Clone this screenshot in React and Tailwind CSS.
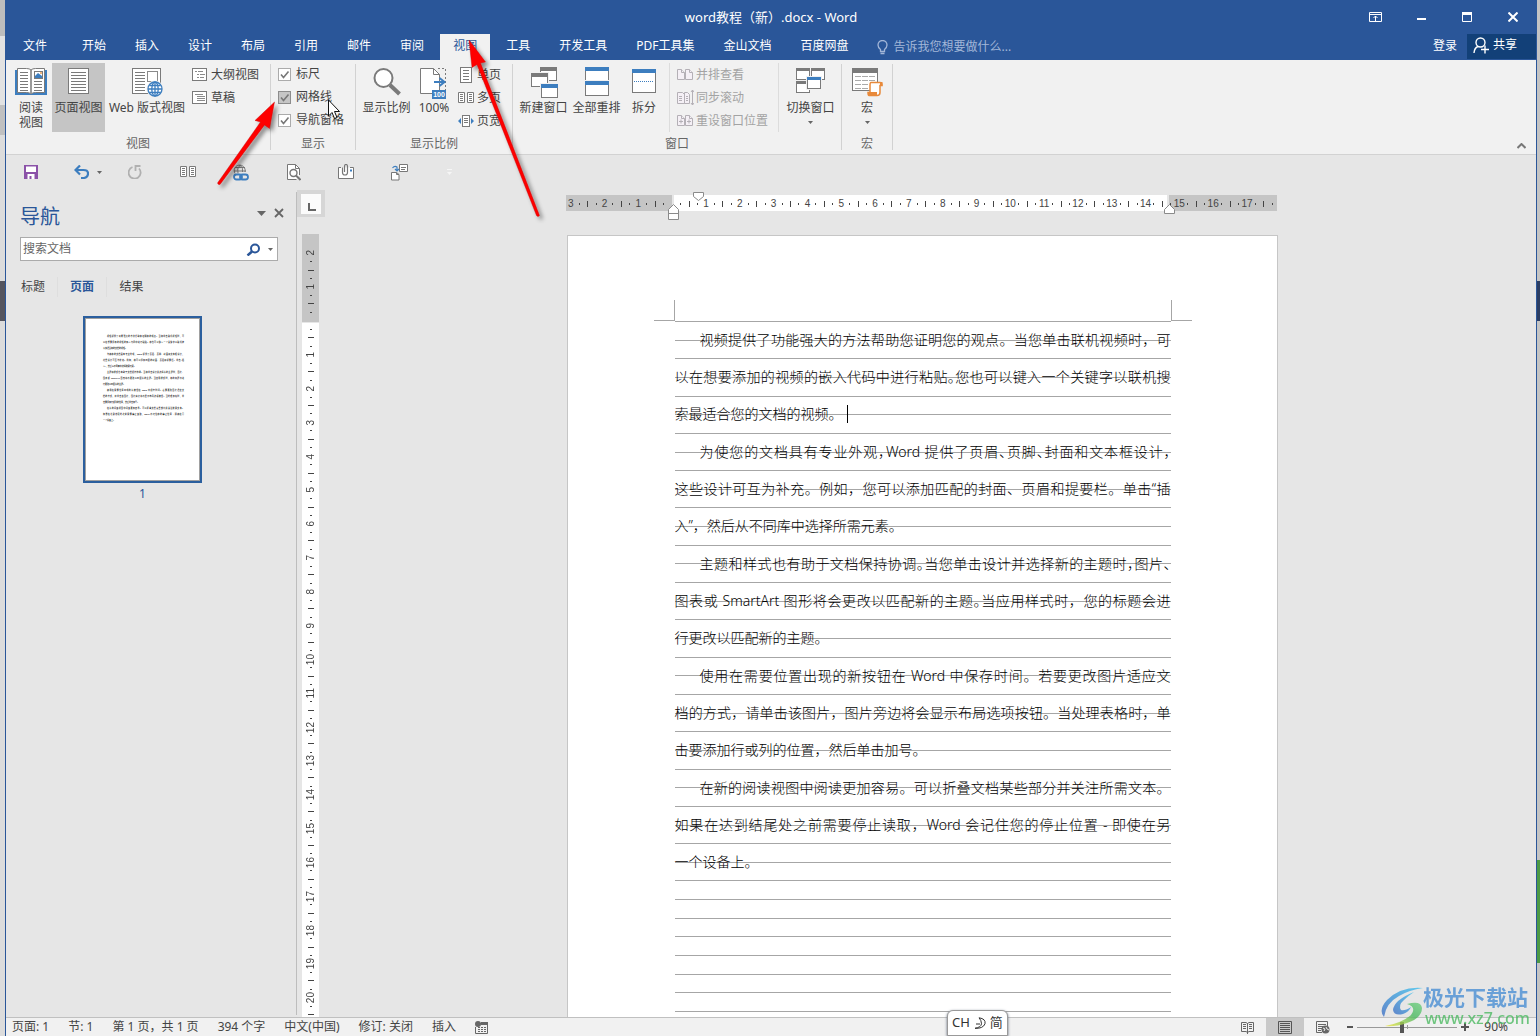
import { useState } from "react";
import clsx from "clsx";

const tabs = ["文件", "开始", "插入", "设计", "布局", "引用", "邮件", "审阅", "视图", "工具", "开发工具", "PDF工具集", "金山文档", "百度网盘"];

// tight: the punctuation marks that take half a character in this line
const lines = [
  { text: "视频提供了功能强大的方法帮助您证明您的观点。当您单击联机视频时，可", indent: true, full: true },
  { text: "以在想要添加的视频的嵌入代码中进行粘贴。您也可以键入一个关键字以联机搜", full: true, tight: "。" },
  { text: "索最适合您的文档的视频。", caret: true },
  { text: "为使您的文档具有专业外观，Word 提供了页眉、页脚、封面和文本框设计，", indent: true, full: true, tight: "，、" },
  { text: "这些设计可互为补充。例如，您可以添加匹配的封面、页眉和提要栏。单击“插", full: true },
  { text: "入”，然后从不同库中选择所需元素。" },
  { text: "主题和样式也有助于文档保持协调。当您单击设计并选择新的主题时，图片、", indent: true, full: true, tight: "。，、" },
  { text: "图表或 SmartArt 图形将会更改以匹配新的主题。当应用样式时，您的标题会进", full: true, tight: "。" },
  { text: "行更改以匹配新的主题。" },
  { text: "使用在需要位置出现的新按钮在 Word 中保存时间。若要更改图片适应文", indent: true, full: true },
  { text: "档的方式，请单击该图片，图片旁边将会显示布局选项按钮。当处理表格时，单", full: true },
  { text: "击要添加行或列的位置，然后单击加号。" },
  { text: "在新的阅读视图中阅读更加容易。可以折叠文档某些部分并关注所需文本。", indent: true, full: true },
  { text: "如果在达到结尾处之前需要停止读取，Word 会记住您的停止位置 - 即使在另", full: true },
  { text: "一个设备上。" },
];

/* SMALL SHAPES */
const Svg = ({ w, h, children, className }) => (
  <svg width={w} height={h} viewBox={`0 0 ${w} ${h}`} fill="none" className={clsx("shrink-0", className)} aria-hidden="true">
    {children}
  </svg>
);

const Caret = ({ className }) => (
  <Svg w={5} h={3} className={className}><path d="M0 0h5L2.500 3z" fill="#666" /></Svg>
);

const Rows = ({ x, y, w, n, gap = 3, color = "#7a7a7a" }) => (
  <path d={Array.from({ length: n }, (_, i) => `M${x} ${y + i * gap + 0.5}h${w}`).join("")} stroke={color} />
);

/* RIBBON ICONS */
const ReadIcon = () => (
  <Svg w={32} h={28}>
    <path d="M0 3h3v22h26V3h3v25H0z" fill="#3d7ebf" />
    <path d="M2.500 1.500h9q3 0 4.500 1.500 1.500-1.500 4.500-1.500h9v24h-9q-3 0-4.500 1.500-1.500-1.500-4.500-1.500h-9z" fill="#fff" stroke="#7a7a7a" />
    <path d="M16 3v23" stroke="#7a7a7a" strokeWidth="1.500" />
    <Rows x={5} y={5} w={8} n={7} />
    <Rows x={19} y={14} w={8} n={4} />
    <rect x="19.500" y="4.500" width="8" height="7" fill="#fff" stroke="#7a7a7a" />
    <path d="M20 11V9l3-3 4 3v2z" fill="#3d7ebf" />
    <circle cx="26" cy="6" r="1" fill="#eda15c" />
  </Svg>
);
const PageIcon = () => (
  <Svg w={22} h={28}>
    <rect x="0.500" y="1.500" width="20" height="25" fill="#fff" stroke="#7a7a7a" />
    <Rows x={3} y={5} w={15} n={7} />
  </Svg>
);
const WebIcon = () => (
  <Svg w={32} h={30}>
    <rect x="1.500" y="1.500" width="28" height="25" fill="#fff" stroke="#7a7a7a" />
    <Rows x={4} y={5} w={10} n={7} />
    <rect x="16.500" y="4.500" width="10" height="10" fill="#fff" stroke="#8a8a8a" />
    <circle cx="24" cy="22" r="8.500" fill="#f1f1f1" />
    <g stroke="#3d7ebf" strokeWidth="1.300">
      <circle cx="24" cy="22" r="7" fill="#fff" />
      <ellipse cx="24" cy="22" rx="3.200" ry="7" />
      <path d="M24 15v14M17 22h14M18.500 18.500h11M18.500 25.500h11" />
    </g>
  </Svg>
);
const OutlineIcon = () => (
  <Svg w={16} h={14}>
    <rect x="0.500" y="0.500" width="14" height="12" fill="#fff" stroke="#7a7a7a" />
    <path d="M3 3.500h2M6 3.500h5M5 6.500h2M8 6.500h5M5 9.500h2M8 9.500h4" stroke="#8a8a8a" />
  </Svg>
);
const DraftIcon = () => (
  <Svg w={16} h={14}>
    <rect x="0.500" y="0.500" width="14" height="12" fill="#fff" stroke="#7a7a7a" />
    <path d="M3 3.500h8M5 5.500h8M5 7.500h8M5 9.500h8" stroke="#8a8a8a" />
  </Svg>
);
const ZoomIcon = () => (
  <Svg w={28} h={30}>
    <path d="M17 18l9.500 9" stroke="#7a7a7a" strokeWidth="4" />
    <circle cx="10.500" cy="11" r="9" fill="#fff" stroke="#7a7a7a" strokeWidth="2" />
  </Svg>
);
const HundredIcon = () => (
  <Svg w={28} h={32}>
    <path d="M18 1.500h7.500V24" stroke="#7a7a7a" strokeDasharray="2 2" />
    <path d="M.5 1.500h13l6 6v19H.5z" fill="#fff" stroke="#7a7a7a" />
    <path d="M13.500 1.500v6h6" stroke="#7a7a7a" />
    <path d="M14 15h10M19.500 11l5 4-5 4" stroke="#3d7ebf" strokeWidth="2" />
    <rect x="12" y="23" width="14" height="9" fill="#3d7ebf" />
    <text x="19" y="30" fontSize="7" fontWeight="700" textAnchor="middle" fill="#fff" fontFamily="Liberation Sans, sans-serif">100</text>
  </Svg>
);
const OnePageIcon = () => (
  <Svg w={16} h={16}>
    <rect x="2.500" y="0.500" width="11" height="15" fill="#fff" stroke="#7a7a7a" />
    <Rows x={5} y={3} w={6} n={4} />
  </Svg>
);
const TwoPageIcon = () => (
  <Svg w={16} h={12}>
    <path d="M.5.5h6v10h-6zM9.500.5h6v10h-6z" fill="#fff" stroke="#7a7a7a" />
    <Rows x={2} y={2} w={3} n={4} gap={2} />
    <Rows x={11} y={2} w={3} n={4} gap={2} />
  </Svg>
);
const PageWidthIcon = () => (
  <Svg w={16} h={12}>
    <rect x="4.500" y="0.500" width="7" height="11" fill="#fff" stroke="#7a7a7a" />
    <Rows x={6} y={3} w={4} n={3} gap={2} />
    <path d="M3 3v6L0 6zM13 3v6l3-3z" fill="#3d7ebf" />
  </Svg>
);
const WindowShape = ({ x, y, w, h, bar = 4, color = "#7a7a7a" }) => (
  <g>
    <rect x={x - 1} y={y - 1} width={w + 2} height={h + 2} fill="#f1f1f1" />
    <rect x={x + 0.5} y={y + 0.5} width={w - 1} height={h - 1} fill="#fff" stroke="#7a7a7a" />
    <rect x={x} y={y} width={w} height={bar} fill={color} />
  </g>
);
const NewWindowIcon = () => (
  <Svg w={28} h={32}>
    <WindowShape x={10} y={0} w={17} h={14} />
    <WindowShape x={1} y={6} w={17} h={14} />
    <WindowShape x={11} y={17} w={17} h={14} color="#3d7ebf" />
  </Svg>
);
const ArrangeIcon = () => (
  <Svg w={26} h={30}>
    <WindowShape x={1} y={0} w={24} h={14} color="#3d7ebf" />
    <WindowShape x={1} y={14} w={24} h={15} color="#3d7ebf" />
  </Svg>
);
const SplitIcon = () => (
  <Svg w={24} h={28}>
    <WindowShape x={0} y={2} w={24} h={24} color="#3d7ebf" />
    <path d="M2 14.500h20" stroke="#3d7ebf" strokeDasharray="1 1" />
  </Svg>
);
const SideIcon = ({ kind }) => (
  <Svg w={17} h={16}>
    <g stroke="#b4b0b6" fill="#f5f0f6">
      {kind === "sync" ? (
        <>
          <path d="M.5 2.500h5l2 2v9h-7zM7.500 2.500h3l2 2v9h-5z" />
          <path d="M2 6.500h3M2 8.500h3M2 10.500h3M9 6.500h2M9 8.500h2M9 10.500h2M15.500 0v15M14 2l1.500-2L17 2M14 13l1.500 2 1.500-2" />
        </>
      ) : (
        <>
          <path d="M.5 2.500h4l3 3v7h-7zM8.500 2.500h4l3 3v7h-7z" />
          <path d="M4.500 2.500v3h3M12.500 2.500v3h3" />
          {kind === "reset" && <path d="M2 8.500h4M4 6.500v4M10 8.500h4M12 6.500v4" />}
        </>
      )}
    </g>
  </Svg>
);
const SwitchIcon = () => (
  <Svg w={30} h={26}>
    <WindowShape x={0} y={1} w={14} h={12} bar={3} />
    <WindowShape x={15} y={1} w={14} h={12} bar={3} />
    <WindowShape x={0} y={14} w={14} h={12} bar={3} />
    <WindowShape x={11} y={10} w={14} h={12} bar={3} color="#3d7ebf" />
  </Svg>
);
const MacroIcon = () => (
  <Svg w={32} h={30}>
    <WindowShape x={1} y={1} w={26} h={23} bar={5} />
    <path d="M4 9.500h6M11 9.500h6M18 9.500h6M4 13.500h6M11 13.500h6M18 13.500h6M4 17.500h6M11 17.500h6M4 21.500h6M11 21.500h6" stroke="#aaa" />
    <path d="M20 15.500h9q2 0 2 3h-2v7q0 3-3 3h-8q-1 0-1-3h2v-7q0-3 1-3z" fill="#fff" stroke="#e8893a" strokeWidth="1.500" />
    <path d="M17 25h9v3.500h-9zM29 15h2.500v3.500H29z" fill="#e8893a" />
  </Svg>
);

/* RIBBON PARTS */
const Group = ({ label, className, children }) => (
  <section aria-label={label} className="flex items-start">
    <div className="flex flex-col">
      <div className={clsx("flex h-[72px] items-start pt-[3px]", className)}>{children}</div>
      <p className="h-[22px] text-center text-xs leading-[24px] text-[#666]">{label}</p>
    </div>
    <div className="mt-1 h-[86px] w-px bg-[#d2d2d2]" />
  </section>
);

const BigButton = ({ icon, label, className, active, drop }) => (
  <button type="button" className={clsx("flex h-[69px] shrink-0 flex-col items-center text-xs leading-[15px] text-[#444]", active && "bg-[#c5c5c5]", className)}>
    <span className="flex h-[37px] w-full items-start justify-center pt-[4px]">{icon}</span>
    <span className="whitespace-pre-line">{label}</span>
    {drop && <Caret className="mt-[6px]" />}
  </button>
);

const SmallButton = ({ icon, label, disabled }) => (
  <button type="button" disabled={disabled} className={clsx("flex h-[23px] items-center gap-[3px] text-xs whitespace-nowrap", disabled ? "text-[#a3a3a3]" : "text-[#444]")}>
    <span className="flex w-4 items-center justify-center">{icon}</span>
    {label}
  </button>
);

const CheckRow = ({ label, hot }) => {
  const [on, setOn] = useState(true);
  return (
    <label className="flex h-[23px] items-center gap-[5px] pb-px text-xs text-[#444]">
      <span className="grid">
        <input type="checkbox" checked={on} onChange={() => setOn(!on)}
          className={clsx("size-[13px] appearance-none border [grid-area:1/1]", hot ? "border-[#8c8c8c] bg-[#c5c5c5]" : "border-[#ababab] bg-white")} />
        {on && (
          <Svg w={13} h={13} className="pointer-events-none [grid-area:1/1]">
            <path d="M3 6.500l2.500 3 5-6" stroke="#777" strokeWidth="1.600" />
          </Svg>
        )}
      </span>
      {label}
    </label>
  );
};

function TitleBar() {
  const [active, setActive] = useState("视图");
  return (
    <header className="bg-[#2a5699] text-white">
      <div className="grid h-[34px] grid-cols-[1fr_auto_1fr] items-center">
        <span />
        <h1 className="text-[13px] leading-4">word教程（新）.docx - Word</h1>
        <div className="flex h-8 justify-end">
          <button type="button" aria-label="功能区显示选项" className="flex w-[46px] items-center justify-center">
            <Svg w={13} h={10}><path d="M.5.5h12v9H.5zM.5 2.500h12M6.500 9V4M4.500 6l2-2 2 2" stroke="#fff" /></Svg>
          </button>
          <button type="button" aria-label="最小化" className="flex w-[46px] items-center justify-center pt-1">
            <Svg w={9} h={2}><path d="M0 0h9v2H0z" fill="#fff" /></Svg>
          </button>
          <button type="button" aria-label="最大化" className="flex w-[46px] items-center justify-center">
            <Svg w={10} h={10}><path d="M.5.5h9v9h-9z" stroke="#fff" /><path d="M0 0h10v3H0z" fill="#fff" /></Svg>
          </button>
          <button type="button" aria-label="关闭" className="flex w-[46px] items-center justify-center">
            <Svg w={10} h={10}><path d="M.5.5l9 9M9.500.5l-9 9" stroke="#fff" strokeWidth="2" /></Svg>
          </button>
        </div>
      </div>
      <div className="flex h-[26px] items-stretch text-xs">
        <nav className="flex gap-[3px] pl-1">
          {tabs.map((tab) => (
            <button key={tab} type="button" onClick={() => setActive(tab)}
              className={clsx("px-[13px] pb-[2px] whitespace-nowrap", active === tab && "bg-[#f1f1f1] text-[#2a5699]", tab === "文件" && "mr-[6px]")}>
              {tab}
            </button>
          ))}
        </nav>
        <button type="button" className="ml-4 flex items-center gap-[5px] text-[#a2b6d8]">
          <Svg w={11} h={15}>
            <path d="M3.500 9.500Q1 7.500 1 5a4.300 4.300 0 0 1 9 0q0 2.500-2.500 4.500v2h-4zM3.500 13.500h4" stroke="#a2b6d8" strokeWidth="1.300" />
          </Svg>
          <span>告诉我您想要做什么...</span>
        </button>
        <button type="button" className="ml-auto px-[10px] pb-[2px]">登录</button>
        <button type="button" className="mb-px flex w-[69px] items-center gap-1 bg-[#124078] pb-[3px] pl-[6px]">
          <Svg w={16} h={17}>
            <circle cx="7.500" cy="5.500" r="4.500" stroke="#fff" strokeWidth="1.400" />
            <path d="M1 16q.3-5 4-6.500M8 12.500h8M12 8.500v8" stroke="#fff" strokeWidth="1.400" />
          </Svg>
          共享
        </button>
      </div>
    </header>
  );
}

function Ribbon() {
  return (
    <div className="flex h-[95px] border-b border-[#d2d2d2] bg-[#f1f1f1]">
      <Group label="视图" className="gap-px pr-[11px] pl-[5px]">
        <BigButton icon={<ReadIcon />} label={"阅读\n视图"} className="w-[40px]" />
        <BigButton icon={<PageIcon />} label="页面视图" active className="w-[53px]" />
        <BigButton icon={<WebIcon />} label="Web 版式视图" className="w-[82px] whitespace-nowrap" />
        <div className="ml-[3px]">
          <SmallButton icon={<OutlineIcon />} label="大纲视图" />
          <SmallButton icon={<DraftIcon />} label="草稿" />
        </div>
      </Group>
      <Group label="显示" className="flex-col pr-[11px] pl-[7px]">
        <CheckRow label="标尺" />
        <CheckRow label="网格线" hot />
        <CheckRow label="导航窗格" />
      </Group>
      <Group label="显示比例" className="pr-[11px] pl-1">
        <BigButton icon={<ZoomIcon />} label="显示比例" className="w-[53px]" />
        <BigButton icon={<HundredIcon />} label="100%" className="w-[42px]" />
        <div className="ml-[3px]">
          <SmallButton icon={<OnePageIcon />} label="单页" />
          <SmallButton icon={<TwoPageIcon />} label="多页" />
          <SmallButton icon={<PageWidthIcon />} label="页宽" />
        </div>
      </Group>
      <Group label="窗口" className="px-1">
        <BigButton icon={<NewWindowIcon />} label="新建窗口" className="w-[53px]" />
        <BigButton icon={<ArrangeIcon />} label="全部重排" className="w-[53px]" />
        <BigButton icon={<SplitIcon />} label="拆分" className="w-[42px]" />
        <div className="ml-1 border-x border-[#dcdcdc] pr-[10px] pl-[7px]">
          <SmallButton icon={<SideIcon />} label="并排查看" disabled />
          <SmallButton icon={<SideIcon kind="sync" />} label="同步滚动" disabled />
          <SmallButton icon={<SideIcon kind="reset" />} label="重设窗口位置" disabled />
        </div>
        <BigButton icon={<SwitchIcon />} label="切换窗口" drop className="ml-[5px] w-[53px]" />
      </Group>
      <Group label="宏" className="px-1">
        <BigButton icon={<MacroIcon />} label="宏" drop className="w-[42px]" />
      </Group>
      <button type="button" aria-label="折叠功能区" className="mt-auto mr-[10px] mb-[5px] ml-auto">
        <Svg w={9} h={6}><path d="M.5 5l4-4 4 4" stroke="#777" strokeWidth="2" /></Svg>
      </button>
    </div>
  );
}

const QuickButton = ({ label, className, children }) => (
  <button type="button" aria-label={label} className={clsx("flex h-8 items-center justify-center", className)}>{children}</button>
);

function QuickBar() {
  return (
    <div className="flex h-[35px] items-start pt-px">
      <QuickButton label="保存" className="w-[49px]">
        <Svg w={14} h={14}>
          <path d="M0 0h14v14H0z" fill="#8b52a8" />
          <path d="M2 1.500h10V7H2zM3.500 9h7v5h-7z" fill="#fff" />
          <path d="M5.500 11h2v3h-2z" fill="#8b52a8" />
        </Svg>
      </QuickButton>
      <QuickButton label="撤消" className="w-[53px] gap-2 pl-3">
        <Svg w={15} h={14}><path d="M7 13h3q4-1 4-4.500T9.500 5H2M6 .5L1.500 5 6 9.500" stroke="#3d7ebf" strokeWidth="2.200" /></Svg>
        <Caret />
      </QuickButton>
      <QuickButton label="恢复" className="w-[53px]">
        <Svg w={14} h={14}><path d="M4.500 2A6 6 0 1 0 11 3.500M12.500 1h-5v5" stroke="#b0b0b0" strokeWidth="1.800" /></Svg>
      </QuickButton>
      <QuickButton label="多页" className="w-[53px]"><TwoPageIcon /></QuickButton>
      <QuickButton label="链接" className="w-[53px]">
        <Svg w={16} h={17}>
          <path d="M2 9.500A5.500 5.500 0 1 1 12 8M2 3.500h10M1 7h12M5 9.500Q3.500 4.500 7 1q3.500 3 2.500 7" stroke="#777" />
          <rect x="1" y="10.500" width="8" height="5" rx="2.500" stroke="#3d7ebf" strokeWidth="1.800" />
          <rect x="7" y="10.500" width="8" height="5" rx="2.500" stroke="#3d7ebf" strokeWidth="1.800" />
        </Svg>
      </QuickButton>
      <QuickButton label="打印预览" className="w-[53px]">
        <Svg w={14} h={17}>
          <path d="M12.500 11V4.500l-4-4h-8v15h9" fill="#fff" stroke="#777" />
          <path d="M8.500.5v4h4" stroke="#777" />
          <circle cx="6.500" cy="9" r="3.500" stroke="#777" strokeWidth="1.400" />
          <path d="M9 11.500l4.500 4.500" stroke="#777" strokeWidth="2" />
        </Svg>
      </QuickButton>
      <QuickButton label="附件" className="w-[53px]">
        <Svg w={17} h={16}>
          <path d="M3 3.500H.5v11h15v-11H12" fill="#fff" stroke="#777" />
          <path d="M4.500 3.500v5q0 2.500 2.500 2.500t2.500-2.500V2.500Q9.500.5 8 .5t-1.500 2V8" stroke="#777" strokeWidth="1.200" />
          <path d="M12 5.500h2v2h-2z" fill="#3d7ebf" />
        </Svg>
      </QuickButton>
      <QuickButton label="文档转换" className="w-[53px]">
        <Svg w={17} h={17}>
          <path d="M8.500.5h8v7h-8z" fill="#fff" stroke="#777" />
          <path d="M10 3.500h5M10 5.500h4" stroke="#777" />
          <path d="M.5 8.500h5l2.500 2v5.500H.5zM5.500 8.500v2H8" fill="#fff" stroke="#777" />
          <path d="M1.500 4q2-2.500 4.500-1v4M4 5l2 2 2-2" stroke="#3d7ebf" strokeWidth="1.200" />
        </Svg>
      </QuickButton>
      <QuickButton label="自定义快速访问工具栏" className="w-[47px]">
        <Svg w={5} h={6}><path d="M0 .5h5" stroke="#f6f6f6" /><path d="M0 3h5L2.500 6z" fill="#f6f6f6" /></Svg>
      </QuickButton>
    </div>
  );
}

/* DOCUMENT TEXT */
const LineText = ({ line }) =>
  line.tight
    ? line.text.split(/([、，。])/).map((part, i) =>
        part && line.tight.includes(part) ? <span key={i} className="[font-feature-settings:'halt']">{part}</span> : part
      )
    : line.text;

function NavPane() {
  const [tab, setTab] = useState("页面");
  return (
    <aside className="mt-[2px] mb-[2px] flex w-[291px] shrink-0 flex-col border-r border-[#bdbdbd] pr-[18px] pl-[14px]">
      <div className="flex h-[45px] items-center pb-[3px]">
        <h2 className="pt-2 text-xl text-[#2a5699]">导航</h2>
        <button type="button" aria-label="任务窗格选项" className="ml-auto"><Svg w={9} h={5}><path d="M0 0h9L4.500 5z" fill="#666" /></Svg></button>
        <button type="button" aria-label="关闭窗格" className="mr-[-6px] ml-2"><Svg w={10} h={10}><path d="M1 1l8 8M9 1L1 9" stroke="#666" strokeWidth="1.800" /></Svg></button>
      </div>
      <div className="flex h-[24px] items-center border border-[#ababab] bg-white">
        <input type="text" aria-label="搜索文档" placeholder="搜索文档" className="min-w-0 flex-1 pl-[2px] text-xs outline-none placeholder:text-[#666]" />
        <button type="button" aria-label="搜索" className="flex items-center gap-[7px] pr-[4px]">
          <Svg w={15} h={13}>
            <circle cx="9" cy="5.500" r="4" stroke="#2a5699" strokeWidth="2" />
            <path d="M6 8.500l-4.500 4" stroke="#2a5699" strokeWidth="2.500" />
          </Svg>
          <Caret />
        </button>
      </div>
      <div className="mt-4 flex h-5 pl-px text-xs text-[#444]">
        {["标题", "页面", "结果"].map((t) => (
          <button key={t} type="button" onClick={() => setTab(t)}
            className={clsx("mr-3 w-[37px] border-r border-[#dedede] pb-px pr-[12px] whitespace-nowrap last:border-none", tab === t && "font-bold text-[#2a5699]")}>
            {t}
          </button>
        ))}
      </div>
      <button type="button" className="mt-[19px] ml-[63px] w-[119px] text-left">
        <span className="block h-[167px] border-2 border-[#2b5f9e] bg-white pt-[16px] pr-[16px] pl-[18px] outline-1 -outline-offset-3 outline-[#a0a0a0]" aria-hidden="true">
          {lines.map((line) => (
            <span key={line.text} className={clsx("block h-[6px] text-[2px] leading-[6px] font-medium whitespace-nowrap text-black", line.indent && "pl-1", line.full && "[text-align-last:justify]")}>
              {line.text}
            </span>
          ))}
        </span>
        <span className="block pt-[2px] text-center text-xs leading-[18px] text-[#2a5699]">1</span>
      </button>
    </aside>
  );
}

/* RULERS: four marks for each unit */
const Mark = ({ index, zero, vertical }) => {
  if (index === zero) return null;
  if (index % 4 === 0) {
    return (
      <span className={clsx("font-['Liberation_Sans',sans-serif] text-[10px] leading-[10px] text-[#444]", vertical && "rotate-180 [writing-mode:vertical-rl]")}>
        {Math.abs(index - zero) / 4}
      </span>
    );
  }
  const long = index % 2 === 0;
  if (vertical) return <span className={clsx("h-px bg-[#444]", long ? "w-[6px]" : "w-[2px]")} />;
  return <span className={clsx("w-px bg-[#444]", long ? "h-[6px]" : "h-[2px]")} />;
};

function RulerTop() {
  return (
    <div className="relative grid h-4 w-[711px] shrink-0">
      <div className="flex gap-[2px] [grid-area:1/1]">
        <div className="w-[106px] bg-[#c5c5c5]" />
        <div className="flex-1 bg-white" />
        <div className="w-[108px] bg-[#c5c5c5]" />
      </div>
      <div className="ml-px flex [grid-area:1/1]">
        {Array.from({ length: 84 }, (_, i) => (
          <span key={i} className="flex w-0 flex-1 items-center justify-center pt-px"><Mark index={i} zero={12} /></span>
        ))}
      </div>
      <Svg w={11} h={9} className="absolute -top-[3px] left-[127px]"><path d="M.5.5h10v4l-5 4-5-4z" fill="#fff" stroke="#8a8a8a" /></Svg>
      <Svg w={11} h={16} className="absolute top-[9px] left-[102px]"><path d="M5.500.5l5 5v10H.5v-10zM.5 9.500h10" fill="#fff" stroke="#8a8a8a" /></Svg>
      <Svg w={11} h={10} className="absolute top-[9px] left-[598px]"><path d="M5.500.5l5 5v4H.5v-4z" fill="#fff" stroke="#8a8a8a" /></Svg>
    </div>
  );
}

function RulerLeft() {
  return (
    <div className="flex w-[28px] shrink-0 flex-col items-center overflow-hidden">
      <button type="button" aria-label="制表符" className="flex h-[27px] w-full shrink-0 items-center justify-center bg-[#d6d6d6]">
        <span className="flex h-[20px] w-[20px] items-end justify-center bg-[#fbfbfb] pb-[3px] pl-[2px]">
          <Svg w={8} h={8}><path d="M1 0v7h7" stroke="#666" strokeWidth="2" /></Svg>
        </span>
      </button>
      <div className="mt-[17px] mr-px grid w-[17px] flex-1 overflow-hidden">
        <div className="flex flex-col gap-px [grid-area:1/1]">
          <div className="h-[88px] shrink-0 bg-[#c5c5c5]" />
          <div className="flex-1 bg-white" />
        </div>
        <div className="mt-[15px] grid h-[770px] auto-rows-fr pl-px [grid-area:1/1]">
          {Array.from({ length: 91 }, (_, i) => (
            <span key={i} className="flex h-0 min-h-full items-center justify-center overflow-visible"><Mark index={i} zero={8} vertical /></span>
          ))}
        </div>
      </div>
    </div>
  );
}

function Document() {
  return (
    <main className="flex min-w-0 flex-1 justify-center overflow-hidden pt-[5px] pr-[18px]">
      <div className="flex w-[712px] shrink-0 flex-col">
        <RulerTop />
        <article className="mt-6 ml-px h-[1005px] shrink-0 border border-[#c6c6c6] bg-white pt-[64px] pr-[85px] pl-[86px]">
          <div className="flex h-[21px] justify-between">
            <span className="w-[21px] border-r border-b border-[#a6a6a6]" />
            <span className="w-[21px] border-b border-l border-[#a6a6a6]" />
          </div>
          <div className="mx-[21px] grid items-start">
            <div className="grid h-[691px] auto-rows-fr border-t border-[#a6a6a6] [grid-area:1/1]">
              {Array.from({ length: 37 }, (_, i) => <span key={i} className="border-b border-[#a6a6a6]" />)}
            </div>
            <div className="grid h-[560px] auto-rows-fr text-sm leading-5 text-black [grid-area:1/1]">
              {lines.map((line) => (
                <p key={line.text} className={clsx("flex items-center font-light whitespace-nowrap", line.indent && "pl-[25px]")}>
                  <span className={clsx(line.full && "flex-1 [text-align-last:justify]")}><LineText line={line} /></span>
                  {line.caret && <span className="ml-1 h-[18px] w-px bg-black" />}
                </p>
              ))}
            </div>
          </div>
        </article>
      </div>
    </main>
  );
}

function StatusBar() {
  const [zoom, setZoom] = useState(45);
  return (
    <footer className="flex h-[19px] shrink-0 items-center border-t border-[#c0c0c0] bg-[#f1f1f1] text-xs leading-[18px] whitespace-nowrap text-[#444]">
      <div className="flex items-center gap-[19px] pl-[6px]">
        {["页面: 1", "节: 1", "第 1 页，共 1 页", "394 个字", "中文(中国)", "修订: 关闭", "插入"].map((t) => <span key={t}>{t}</span>)}
        <Svg w={13} h={13}>
          <path d="M5 2.500h7.500v10H.5V6" stroke="#666" />
          <path d="M6 1h7v3H6z" fill="#666" />
          <circle cx="3" cy="3" r="3" fill="#666" />
          <path d="M3 6.500h8M3 8.500h8M3 10.500h8" stroke="#666" strokeDasharray="2 1" />
        </Svg>
      </div>
      <div className="ml-auto flex items-center self-stretch pr-[28px]">
        <button type="button" aria-label="阅读视图" className="flex w-[38px] justify-center">
          <Svg w={13} h={13}>
            <path d="M.5 1.500H5l1.500 1L8 1.500h4.500v9H8l-1.500 1-1.500-1H.5zM6.500 2v11" stroke="#666" />
            <path d="M2 3.500h3M2 5.500h3M2 7.500h3M8 3.500h3M8 5.500h3M8 7.500h3" stroke="#666" />
          </Svg>
        </button>
        <button type="button" aria-label="页面视图" className="flex w-[38px] items-center justify-center self-stretch bg-[#c9c9c9]">
          <Svg w={14} h={13}><path d="M.5.5h13v12H.5z" stroke="#555" /><Rows x={2} y={2} w={10} n={5} gap={2} color="#555" /></Svg>
        </button>
        <button type="button" aria-label="Web 版式视图" className="flex w-[38px] justify-center">
          <Svg w={14} h={13}>
            <path d="M6 11.500H.5V.5h11V5M2 3.500h8M2 5.500h5M2 7.500h4M2 9.500h3" stroke="#666" />
            <circle cx="9.500" cy="8.500" r="4" fill="#666" />
            <path d="M7 7l2 1-1 2M10 6l1 2 2 1" stroke="#eee" />
          </Svg>
        </button>
        <button type="button" aria-label="缩小" className="flex w-[15px] justify-center"><Svg w={6} h={2}><path d="M0 0h6v2H0z" fill="#555" /></Svg></button>
        <span className="grid w-[100px] items-center">
          <span className="h-1 w-px justify-self-center bg-[#999] [grid-area:1/1]" />
          <input type="range" min="0" max="100" value={zoom} onChange={(e) => setZoom(e.target.value)} aria-label="显示比例"
            className="h-px w-full appearance-none bg-[#999] [grid-area:1/1] [&::-webkit-slider-thumb]:h-[11px] [&::-webkit-slider-thumb]:w-1 [&::-webkit-slider-thumb]:appearance-none [&::-webkit-slider-thumb]:bg-[#555]" />
        </span>
        <button type="button" aria-label="放大" className="flex w-[16px] justify-center"><Svg w={8} h={8}><path d="M3 0h2v3h3v2H5v3H3V5H0V3h3z" fill="#555" /></Svg></button>
        <span className="pl-[11px]">90%</span>
      </div>
    </footer>
  );
}

/* PARTS OVER THE WINDOW */
function Pointers() {
  return (
    <Svg w={640} h={230} className="pointer-events-none absolute top-0 left-0">
      <defs>
        <filter id="shade" x="-20%" y="-20%" width="150%" height="150%">
          <feDropShadow dx="3" dy="3" stdDeviation="2" floodColor="#000" floodOpacity="0.45" />
        </filter>
      </defs>
      <g filter="url(#shade)" fill="#fe0000" stroke="#c00000" strokeWidth="0.400">
        <path d="M274.500 102L255 120.500l5.500 1.500L217.500 183q.5 2 2.500 1.500L264.500 125l5 3.500z" />
        <path d="M469 40l3 27.500 5-3 59.500 151q1.500 2 3 0L480.500 63l5-1z" />
      </g>
      <path d="M328.500 100v16l3.500-3.500 2.500 6 2.500-1-2.500-6h5z" fill="#fff" stroke="#111" />
    </Svg>
  );
}

function Watermark() {
  return (
    <div className="pointer-events-none absolute right-[10px] bottom-2 flex opacity-80">
      <Svg w={42} h={42}>
        <defs>
          <linearGradient id="sky" x1="0" y1="1" x2="1" y2="0"><stop stopColor="#3f6fc4" /><stop offset="1" stopColor="#3fc2ef" /></linearGradient>
          <linearGradient id="leaf" x1="0" y1="1" x2="1" y2="0"><stop stopColor="#f2e640" /><stop offset="0.600" stopColor="#4dba62" /><stop offset="1" stopColor="#6fcf7f" /></linearGradient>
        </defs>
        <path d="M42 2Q20 0 6 14-3 24 3 31q2-14 15-21Q28 4 42 2z" fill="url(#sky)" />
        <path d="M33 6Q13 14 12 24q1 6 10 4 6-2 8-7-6 4-10 3-3-5 3-10 4-4 10-8z" fill="url(#sky)" />
        <path d="M26 18q14-4 15 4 0 10-15 15-12 4-22 3 17-3 26-11 6-8-4-11z" fill="url(#leaf)" />
      </Svg>
      <div className="flex flex-col whitespace-nowrap">
        <span className="text-[21px] leading-[22px] font-bold text-[#4a8fd4]">极光下载站</span>
        <span className="pl-[2px] text-base leading-[20px] font-medium text-[#4dba62]">www.xz7.com</span>
      </div>
    </div>
  );
}

export default function App() {
  return (
    <div className="relative flex h-screen overflow-hidden bg-[#e6e6e6] font-['Noto_Sans','Noto_Sans_CJK_SC',sans-serif]">
      <div className="flex w-[5px] shrink-0 flex-col bg-[#dcdcdc]">
        <div className="h-9 bg-[#bdbdbd]" />
        <div className="h-[69px] bg-[#e2e2e2]" />
        <div className="h-[30px] bg-[#c0c0c0]" />
        <div className="h-[146px] bg-[#dcdcdc]" />
        <div className="h-10 bg-[#55555e]" />
      </div>
      <div className="flex min-w-0 flex-1 flex-col border-x border-[#2a5699]">
        <TitleBar />
        <Ribbon />
        <QuickBar />
        <div className="flex min-h-0 flex-1">
          <NavPane />
          <RulerLeft />
          <Document />
        </div>
        <StatusBar />
      </div>
      <div className="flex w-[3px] shrink-0 flex-col bg-[#c4c4c4]">
        <div className="mt-[281px] h-10 bg-[#2c3e63]" />
        <div className="mt-auto mb-[73px] h-[103px] bg-[#4c9a45]" />
      </div>
      <div className="absolute bottom-0 left-[947px] flex h-[26px] items-center gap-1 rounded-t-md border border-[#999] bg-white px-1 text-[13px] text-[#333] shadow-sm shadow-gray-500">
        <span>CH</span>
        <Svg w={12} h={12}><path d="M5 .8q7 1 6 6-2 5-10 4.500 6-1 6.500-4.500Q7.500 3.500 5 .8zM2 7h4" stroke="#333" /></Svg>
        <span>简</span>
      </div>
      <Pointers />
      <Watermark />
    </div>
  );
}
